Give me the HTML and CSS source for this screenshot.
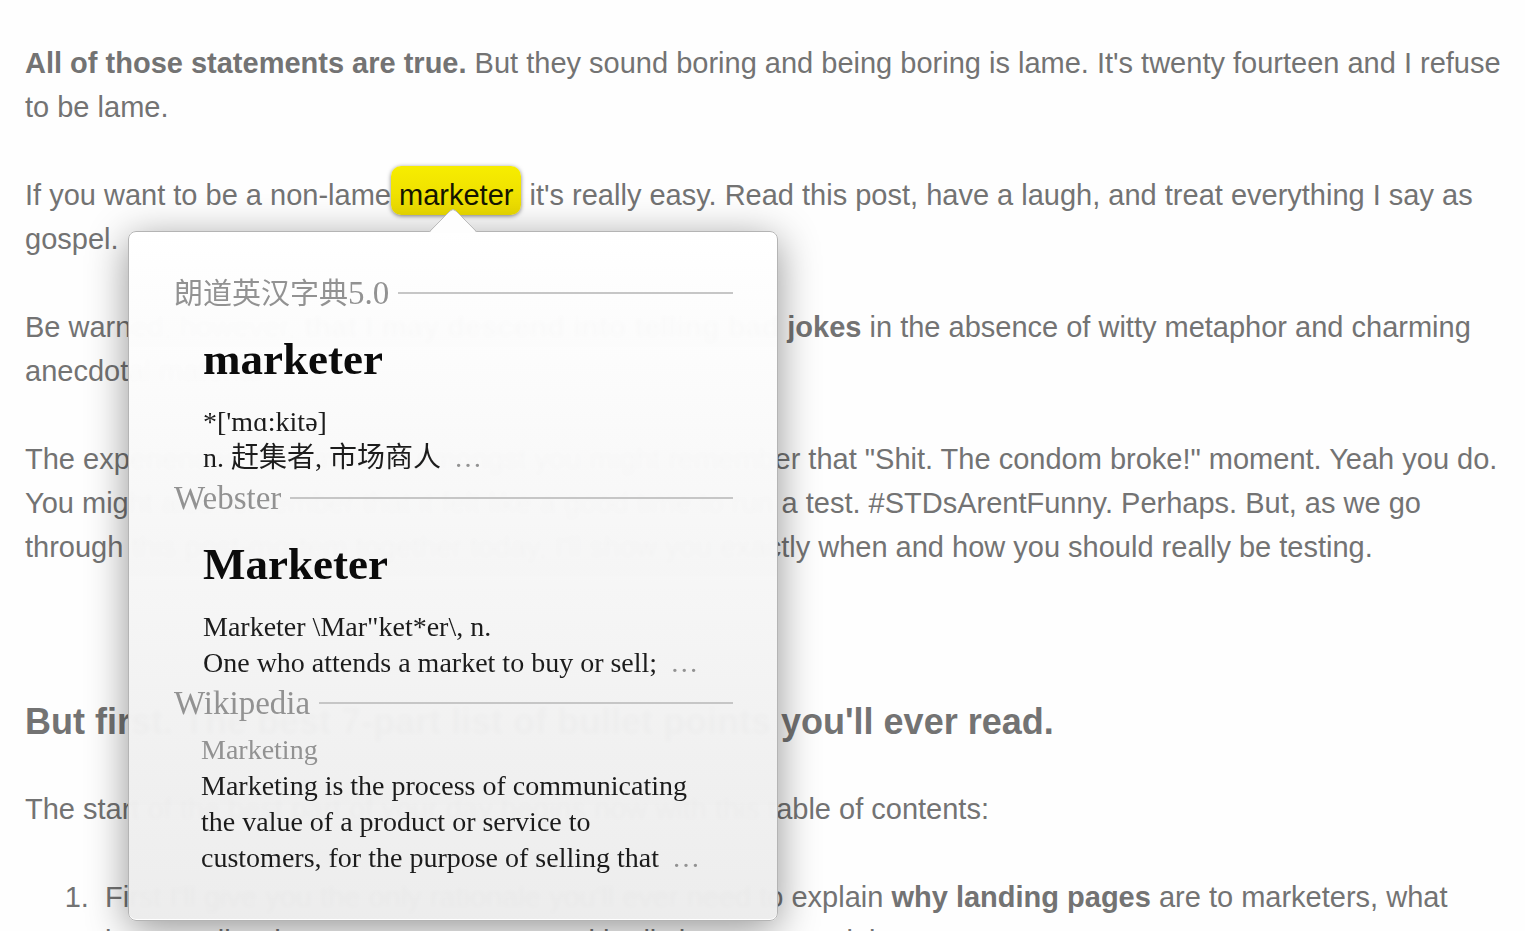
FILE: index.html
```html
<!DOCTYPE html>
<html lang="en">
<head>
<meta charset="utf-8">
<title>Landing page post</title>
<link rel="stylesheet" href="styles.css">
</head>
<body>
<main class="article">
<p><strong>All of those statements are true.</strong> But they sound boring and being boring is lame. It's twenty fourteen and I refuse<br>to be lame.</p>
<p>If you want to be a non-lame <span class="lookup"><mark class="word">marketer</mark>
<span class="popover" role="dialog" aria-label="Dictionary">
<svg class="arrow" viewBox="0 0 48 24" aria-hidden="true"><path class="arrow-fill" d="M0 24 L21 2 Q24 -1 27 2 L48 24 Z"/><path class="arrow-line" d="M0 23 L21 2 Q24 -1 27 2 L48 23"/></svg>
<span class="source"><span><span class="han" lang="zh">朗道英汉字典</span>5.0</span></span>
<span class="entry"><b class="headword">marketer</b><span class="def">*['mɑ:kitə]<br>n. <span class="han" lang="zh">赶集者</span>, <span class="han" lang="zh">市场商人</span> <span class="more">…</span></span></span>
<span class="source">Webster</span>
<span class="entry"><b class="headword">Marketer</b><span class="def">Marketer \Mar"ket*er\, n.<br>One who attends a market to buy or sell; <span class="more">…</span></span></span>
<span class="source">Wikipedia</span>
<span class="entry brief"><span class="topic">Marketing</span><span class="def">Marketing is the process of communicating<br>the value of a product or service to<br>customers, for the purpose of selling that <span class="more">…</span></span></span>
</span></span> it's really easy. Read this post, have a laugh, and treat everything I say as<br>gospel.</p>
<p>Be warned, however, <strong>that I may descend into telling bad jokes</strong> in the absence of witty metaphor and charming<br>anecdotal material.</p>
<p>The experienced love-makers amongst you might remember that "Shit. The condom broke!" moment. Yeah you do.<br>You might also remember that it felt like a good time to run a test. #STDsArentFunny. Perhaps. But, as we go<br>through this post-mortem together today, I'll show you exactly when and how you should really be testing.</p>
<h2>But first. The best 7-part list of bullet points you'll ever read.</h2>
<p>The start of the best part of your day begins now with this table of contents:</p>
<ol>
<li>First I'll give you the only rationale you'll ever need to explain <strong>why landing pages</strong> are to marketers, what<br>bonus rolls what to a guy as to east with all shoes. Essential.</li>
</ol>
</main>
</body>
</html>
```
FILE: styles.css
```css
body {
  margin: 0;
  overflow: hidden;
  background: #fefefe;
  color: #737373;
  font: 29px/44px "Liberation Sans", Arial, sans-serif;
}
.article {
  box-sizing: border-box;
  height: 100vh;
  padding: 41px 0 0 25px;
  white-space: nowrap;
}
.article p { margin: 0 0 44px; }
.article h2 { margin: 131px 0 43px; font-size: 36px; line-height: 44px; }
.article ol { margin: 0; padding-left: 80px; }
.article li::marker { content: counter(list-item) ".\a0\a0"; }
.lookup { position: relative; }
.word {
  padding: 13px 8px 4px;
  margin-left: -8px;
  border-radius: 10px;
  color: #151500;
  background: linear-gradient(#f7ed00, #ead900);
  box-shadow: 0 1px 4px rgba(0, 0, 0, .5);
}
.popover {
  position: absolute;
  z-index: 2;
  top: 52px;
  left: -271px;
  box-sizing: border-box;
  width: 650px;
  padding: 43px 44px 44px 45px;
  border: 1px solid #b4b4b4;
  border-radius: 8px;
  background: linear-gradient(rgba(255, 255, 255, .98), rgba(236, 236, 236, .97));
  backdrop-filter: blur(2px);
  box-shadow: 0 8px 40px rgba(0, 0, 0, .42), inset 0 -1px 0 #fff;
  color: #1c1c1c;
  font: 28px/36px "Liberation Serif", "Noto Sans CJK SC", serif;
}
.arrow {
  position: absolute;
  top: -23px;
  left: 300px;
  width: 48px;
  height: 24px;
}
.arrow-fill { fill: #fefefe; }
.arrow-line { fill: none; stroke: #bcbcbc; }
.source {
  display: flex;
  align-items: center;
  gap: 9px;
  height: 36px;
  color: #929292;
  font-size: 33px;
}
.source::after { content: ""; flex: 1; border-top: 2px solid #c6c6c6; }
.source .han { font-size: 29px; }
.han { font-size: 28px; line-height: 1; }
.entry { display: block; padding: 25px 0 4px 29px; }
.headword {
  display: block;
  margin-bottom: 22px;
  color: #0b0b0b;
  font-size: 45px;
  line-height: 46px;
}
.def, .topic { display: block; }
.brief { padding: 11px 0 0 27px; }
.topic, .more { color: #929292; }
.more { margin-left: 6px; }
```
